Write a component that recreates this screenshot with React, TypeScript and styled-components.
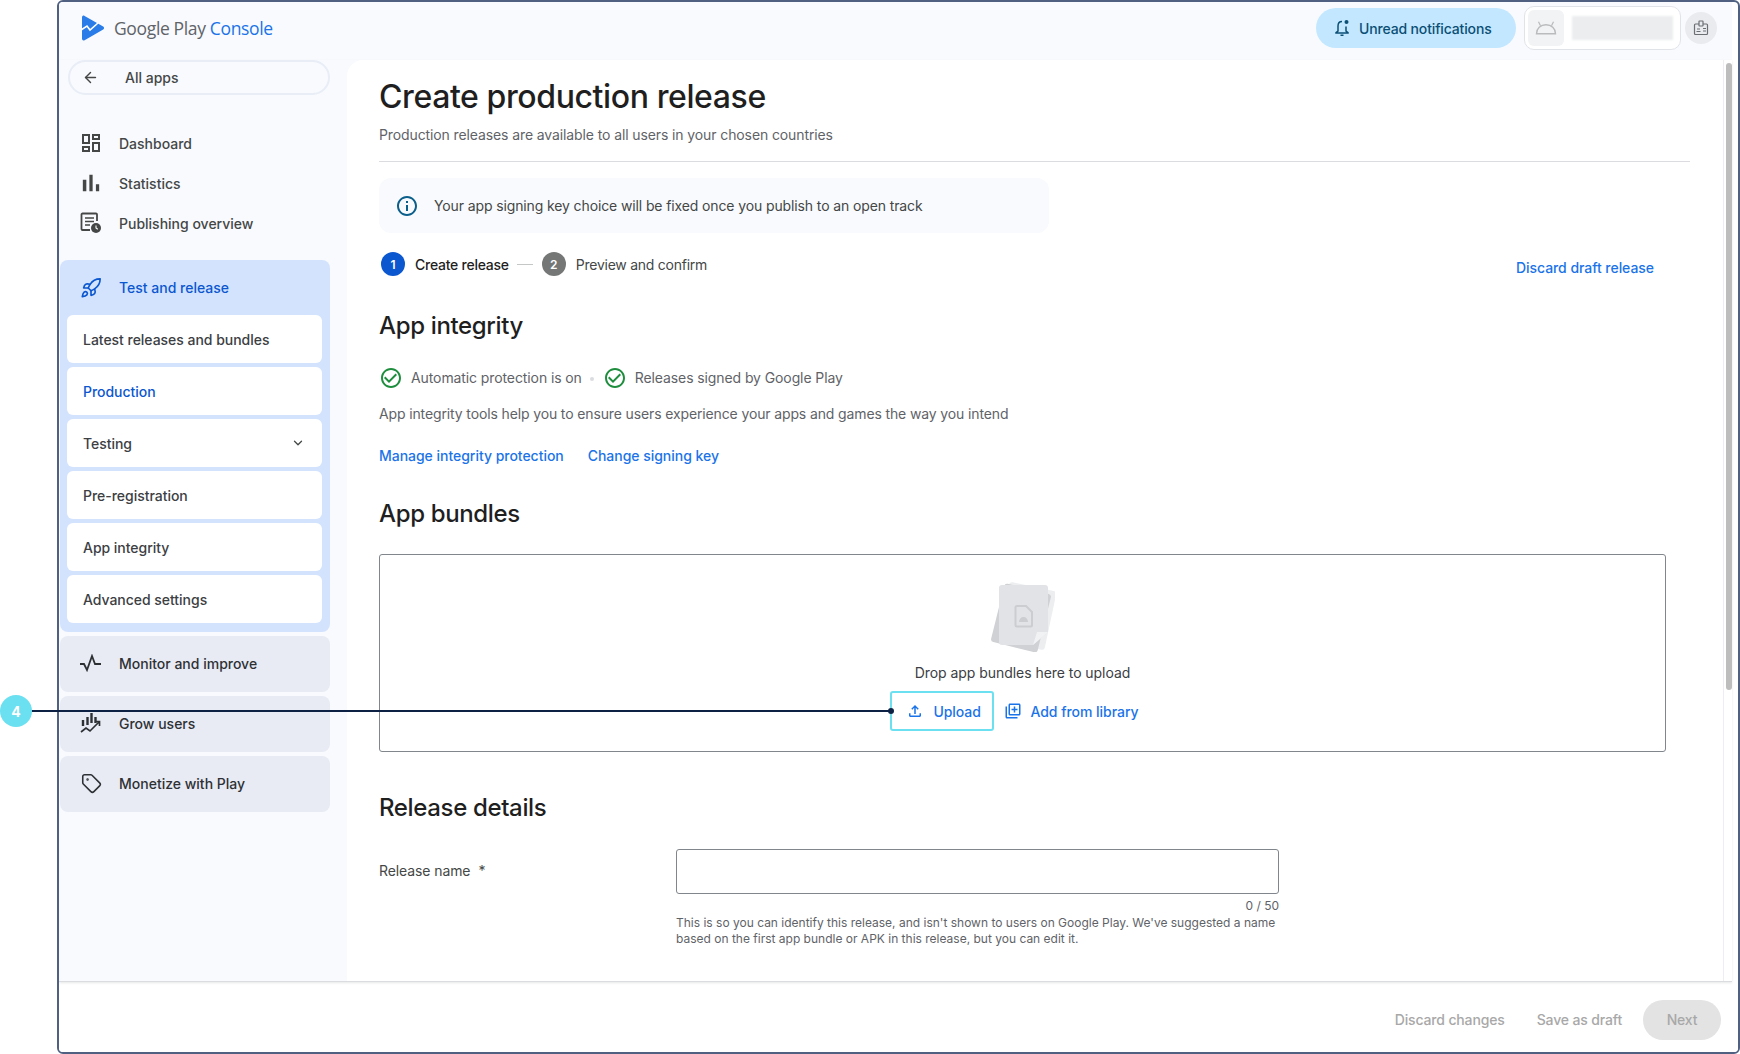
import React from 'react';
import styled, { createGlobalStyle } from 'styled-components';
import { ArrowLeft, ChevronDown, Rocket, Tag } from 'lucide-react';

const Global = createGlobalStyle`
  html, body { margin: 0; padding: 0; background: #fff; }
  body { font-family: Inter, "Liberation Sans", sans-serif; overflow: hidden; }
  * { box-sizing: border-box; }
  svg { flex: none; }
`;

const Page = styled.div`
  position: relative;
  width: 1740px;
  height: 1054px;
  padding-left: 57px;
  overflow: hidden;
`;
const Window = styled.div`
  width: 1683px;
  height: 1054px;
  border: 2px solid #4f6080;
  border-radius: 6px;
  background: #fff;
  display: flex;
  flex-direction: column;
  overflow: hidden;
`;
const TopBar = styled.header`
  height: 58px;
  flex: none;
  margin-right: 6px;
  background: #f8fafe;
  display: flex;
  align-items: center;
  padding: 0 15px 6px 22px;
`;
const LogoWrap = styled.div`
  display: flex;
  align-items: center;
  gap: 9px;
`;
const LogoText = styled.div`
  font-family: "Open Sans", sans-serif;
  font-size: 17.5px;
  letter-spacing: -0.35px;
  color: #5f6368;
  span { color: #1a73e8; }
`;
const TopRight = styled.div`
  margin-left: auto;
  display: flex;
  align-items: center;
`;
const NotifyPill = styled.div`
  width: 200px;
  height: 40px;
  border-radius: 20px;
  background: #c2e7ff;
  display: flex;
  align-items: center;
  gap: 9px;
  padding-left: 18px;
  color: #0b4f75;
  font-size: 14px;
  font-weight: 500;
  letter-spacing: -0.15px;
`;
const AccountBox = styled.div`
  width: 157px;
  height: 44px;
  margin-left: 8px;
  border: 1px solid #e0e3e8;
  border-radius: 10px;
  background: #fff;
  display: flex;
  align-items: center;
  padding: 0 7px 0 3px;
  gap: 8px;
`;
const AndroidTile = styled.div`
  width: 36px;
  height: 36px;
  border-radius: 6px;
  background: #f1f3f4;
  display: flex;
  align-items: center;
  justify-content: center;
`;
const BlurBar = styled.div`
  flex: 1;
  height: 24px;
  background: #ebedee;
  filter: blur(1px);
`;
const RoundIcon = styled.div`
  width: 32px;
  height: 32px;
  margin-left: 4px;
  border-radius: 50%;
  background: #e9ebef;
  display: flex;
  align-items: center;
  justify-content: center;
`;
const Body = styled.div`
  flex: 1;
  min-height: 0;
  margin-right: 6px;
  background: #f8fafe;
  display: flex;
  border-bottom: 1px solid #dadce0;
  box-shadow: 0 1px 2px rgba(60, 64, 67, 0.12);
  position: relative;
`;
const Sidebar = styled.nav`
  width: 288px;
  flex: none;
  padding-left: 1px;
`;
const BackPill = styled.div`
  width: 262px;
  height: 35px;
  margin-left: 8px;
  border: 2px solid #e8edf6;
  border-radius: 18px;
  display: flex;
  align-items: center;
  padding-left: 12px;
  font-size: 14px;
  font-weight: 500;
  color: #444746;
`;
const BackLabel = styled.span`
  margin-left: 26px;
`;
const TopNav = styled.div`
  margin-top: 28px;
  display: flex;
  flex-direction: column;
`;
const NavRow = styled.div`
  height: 40px;
  display: flex;
  align-items: center;
  padding-left: 21px;
  gap: 18px;
  font-size: 14px;
  font-weight: 500;
  color: #444746;
`;
const IconSlot = styled.span`
  width: 20px;
  height: 20px;
  flex: none;
  display: flex;
  align-items: center;
  justify-content: center;
`;
const ActiveGroup = styled.div`
  width: 270px;
  margin-top: 17px;
  height: 372px;
  border-radius: 8px;
  background: #d3e3fd;
  padding: 0 8px 0 7px;
`;
const ActiveHead = styled.div`
  height: 55px;
  display: flex;
  align-items: center;
  padding-left: 14px;
  gap: 18px;
  font-size: 14px;
  font-weight: 500;
  color: #0b57d0;
`;
const SubList = styled.div`
  display: flex;
  flex-direction: column;
  gap: 4px;
`;
const SubItem = styled.div<{ $active?: boolean }>`
  height: 48px;
  border-radius: 6px;
  background: #fff;
  display: flex;
  align-items: center;
  justify-content: space-between;
  padding: 0 17px 0 16px;
  font-size: 14px;
  font-weight: 500;
  letter-spacing: -0.03px;
  color: ${p => (p.$active ? '#0b57d0' : '#3c4043')};
`;
const CollapsedList = styled.div`
  margin-top: 4px;
  display: flex;
  flex-direction: column;
  gap: 4px;
`;
const Collapsed = styled.div`
  width: 270px;
  height: 56px;
  border-radius: 8px;
  background: #e8ebf4;
  display: flex;
  align-items: center;
  padding: 0 0 2px 21px;
  gap: 18px;
  font-size: 14px;
  font-weight: 500;
  color: #2e3134;
`;
const Main = styled.main`
  position: relative;
  flex: 1;
  min-width: 0;
  border-radius: 16px 0 0 0;
  background: #fff;
  overflow: hidden;
  padding: 17px 0 0 32px;
`;
const Title = styled.h1`
  margin: 0;
  font-size: 32px;
  line-height: 40px;
  font-weight: 500;
  letter-spacing: -0.4px;
  color: #1f1f1f;
`;
const Subtitle = styled.div`
  margin-top: 8px;
  font-size: 14px;
  line-height: 20px;
  letter-spacing: -0.11px;
  color: #5f6368;
  padding-bottom: 16px;
  width: 1311px;
  border-bottom: 1px solid #dadce0;
`;
const InfoBanner = styled.div`
  margin-top: 16px;
  width: 670px;
  height: 55px;
  border-radius: 12px;
  background: #f8fafe;
  display: flex;
  align-items: center;
  padding-left: 16px;
  gap: 15px;
  font-size: 14px;
  letter-spacing: -0.12px;
  color: #444746;
`;
const StepRow = styled.div`
  position: relative;
  margin-top: 18px;
  height: 26px;
  width: 1275px;
  display: flex;
  align-items: center;
  padding-left: 2px;
  font-size: 14px;
`;
const StepDot = styled.span<{ $on?: boolean }>`
  width: 24px;
  height: 24px;
  border-radius: 50%;
  background: ${p => (p.$on ? '#0b57d0' : '#747775')};
  color: #fff;
  font-size: 12px;
  font-weight: 600;
  display: flex;
  align-items: center;
  justify-content: center;
`;
const StepLabel = styled.span<{ $on?: boolean }>`
  margin-left: 10px;
  font-weight: ${p => (p.$on ? 500 : 400)};
  letter-spacing: -0.25px;
  color: ${p => (p.$on ? '#1f1f1f' : '#444746')};
`;
const StepDash = styled.span`
  width: 16px;
  height: 1px;
  background: #c4c7c5;
  margin: 0 9px 0 8px;
`;
const DiscardLink = styled.a`
  margin-left: auto;
  margin-top: 6px;
  font-size: 14px;
  font-weight: 500;
  letter-spacing: -0.05px;
  color: #1a73e8;
`;
const Heading = styled.h2<{ $top: number }>`
  margin: ${p => p.$top}px 0 0;
  font-size: 24px;
  line-height: 32px;
  font-weight: 500;
  letter-spacing: -0.35px;
  color: #1f1f1f;
`;
const CheckRow = styled.div`
  margin-top: 24px;
  height: 24px;
  display: flex;
  align-items: center;
  font-size: 14px;
  letter-spacing: -0.1px;
  color: #5f6368;
`;
const CheckLabel = styled.span`
  margin-left: 8px;
  margin-top: -1px;
`;
const Sep = styled.span`
  width: 4px;
  height: 4px;
  border-radius: 50%;
  background: #dadce0;
  margin: 2px 9px 0 8px;
`;
const BodyText = styled.div`
  margin-top: 14px;
  font-size: 14px;
  line-height: 20px;
  letter-spacing: -0.13px;
  color: #5f6368;
`;
const LinkRow = styled.div`
  margin-top: 22px;
  display: flex;
  gap: 24px;
  font-size: 14px;
  line-height: 20px;
  font-weight: 500;
  letter-spacing: -0.03px;
  color: #1a73e8;
`;
const DropZone = styled.div`
  margin-top: 24px;
  width: 1287px;
  height: 198px;
  border: 1px solid #80868b;
  border-radius: 3px;
  display: flex;
  flex-direction: column;
  align-items: center;
  padding-top: 27px;
`;
const DropText = styled.div`
  margin-top: 11px;
  font-size: 14px;
  line-height: 20px;
  letter-spacing: -0.05px;
  color: #3c4043;
`;
const ActionRow = styled.div`
  margin-top: 8px;
  display: flex;
  align-items: center;
  gap: 10px;
  padding-right: 16px;
`;
const UploadButton = styled.div`
  width: 104px;
  height: 40px;
  border: 2px solid #6be0f0;
  border-radius: 3px;
  display: flex;
  align-items: center;
  padding-left: 14px;
  gap: 9px;
  font-size: 14px;
  font-weight: 500;
  letter-spacing: -0.05px;
  color: #1a73e8;
`;
const LibraryButton = styled.div`
  display: flex;
  align-items: center;
  gap: 8px;
  font-size: 14px;
  font-weight: 500;
  letter-spacing: -0.03px;
  color: #1a73e8;
`;
const FormRow = styled.div`
  margin-top: 25px;
  display: flex;
`;
const FormLabel = styled.div`
  width: 297px;
  height: 43px;
  display: flex;
  align-items: center;
  font-size: 14px;
  letter-spacing: -0.1px;
  color: #444746;
  gap: 8px;
`;
const FormField = styled.div`
  width: 603px;
`;
const Input = styled.div`
  height: 45px;
  border: 1px solid #80868b;
  border-radius: 3px;
`;
const Counter = styled.div`
  margin-top: 5px;
  font-size: 12px;
  line-height: 14px;
  text-align: right;
  color: #5f6368;
`;
const Help = styled.div`
  margin-top: 2px;
  font-size: 12px;
  line-height: 16px;
  color: #5f6368;
  width: 612px;
`;
const ScrollTrack = styled.div`
  position: absolute;
  top: 0;
  right: 0;
  bottom: 0;
  width: 9px;
  border-left: 1px solid #eceef0;
  background: #fff;
`;
const ScrollThumb = styled.div`
  margin: 3px 0 0 2px;
  width: 6px;
  height: 627px;
  border-radius: 3px;
  background: #bdbdbd;
`;
const Footer = styled.footer`
  height: 70px;
  flex: none;
  background: #fff;
  display: flex;
  align-items: center;
  justify-content: flex-end;
  padding: 5px 17px 0 0;
  font-size: 14px;
  font-weight: 500;
  letter-spacing: -0.15px;
  color: #a8a8a8;
`;
const FooterAction = styled.span`
  margin-right: 32px;
`;
const NextButton = styled.div`
  width: 78px;
  height: 40px;
  margin-left: -11px;
  border-radius: 20px;
  background: #e3e3e3;
  display: flex;
  align-items: center;
  justify-content: center;
`;
const CalloutLine = styled.div`
  position: absolute;
  left: 30px;
  top: 710px;
  width: 861px;
  height: 2px;
  background: #0d2145;
  &::after {
    content: '';
    position: absolute;
    right: -3px;
    top: -2px;
    width: 6px;
    height: 6px;
    border-radius: 50%;
    background: #0d2145;
  }
`;
const CalloutBadge = styled.div`
  position: absolute;
  left: 0;
  top: 695px;
  width: 32px;
  height: 32px;
  border-radius: 50%;
  background: #6be0f0;
  color: #fff;
  font-size: 14px;
  font-weight: 700;
  display: flex;
  align-items: center;
  justify-content: center;
`;

const M = ({ d, size = 24, color = '#444746' }: { d: string; size?: number; color?: string }) => (
  <svg width={size} height={size} viewBox="0 0 24 24" fill={color}><path d={d} /></svg>
);

const Logo = () => (
  <svg width="24" height="26" viewBox="0 0 24 26">
    <path d="M1 2.500C1 .8 2.300 0 3.600 1l18.600 10.600c1.200.8 1.200 2.200 0 3L3.600 25.200C2.300 26 1 25.200 1 23.500z" fill="#2a7de9" />
    <path d="M0 15l6-4 3 4 8-7" fill="none" stroke="#fff" strokeWidth="1.600" />
  </svg>
);
const DashboardIcon = () => (
  <M size={24} d="M19 5v2h-4V5h4M9 5v6H5V5h4m10 8v6h-4v-6h4M9 17v2H5v-2h4M21 3h-8v6h8V3zM11 3H3v10h8V3zm10 8h-8v10h8V11zm-10 4H3v6h8v-6z" />
);
const StatsIcon = () => <M size={28} d="M5 9.200h3V19H5zM10.600 5h2.800v14h-2.800zm5.600 8H19v6h-2.800z" />;
const PublishIcon = () => (
  <svg width="22" height="22" viewBox="0 0 22 22" fill="none">
    <path d="M17 9V2.500a1 1 0 0 0-1-1H2.500a1 1 0 0 0-1 1V17a1 1 0 0 0 1 1H10" stroke="#444746" strokeWidth="1.800" />
    <path d="M5 6h9M5 9.500h9M5 13h5" stroke="#444746" strokeWidth="1.600" />
    <circle cx="16" cy="16" r="5" fill="#444746" />
    <path d="M16 13.500V16l1.800 1.200" stroke="#fff" strokeWidth="1.100" />
  </svg>
);
const PulseIcon = () => (
  <svg width="24" height="18" viewBox="0 0 24 18" fill="none" stroke="#2e3134" strokeWidth="1.800">
    <path d="M1 10h4l3 6 5-14 3 8h6" />
  </svg>
);
const GrowIcon = () => (
  <svg width="22" height="22" viewBox="0 0 22 22" fill="none" stroke="#2e3134">
    <path d="M3 8v6M7.500 5v8M11.500 1v10M15.500 5v6" strokeWidth="2.400" />
    <path d="M1 20l5-4 4 3 9-9M15 9.500h4.500V14" strokeWidth="1.700" />
  </svg>
);
const AndroidGlyph = ({ size = 22, color = '#b9bbbd' }: { size?: number; color?: string }) => (
  <svg width={size} height={size * 0.7} viewBox="0 0 22 15" fill="none" stroke={color}>
    <path d="M1.500 13.500C1.500 8.500 5.500 4.500 11 4.500s9.500 4 9.500 9z" strokeWidth="1.400" />
    <path d="M5.500 5.500L3.500 1.500M16.500 5.500l2-4" strokeWidth="1.200" />
  </svg>
);
const BadgeIcon = () => (
  <svg width="16" height="16" viewBox="0 0 16 16" fill="none" stroke="#6b6e72" strokeWidth="1.200">
    <rect x="1.500" y="4" width="13" height="10.500" rx="1" />
    <rect x="6" y="1" width="4" height="5" rx=".5" fill="#e9ebef" />
    <path d="M3.500 11.500h4M10 8.500h3M10 11h3M4 9h3" />
  </svg>
);
const BellIcon = () => (
  <svg width="16" height="18" viewBox="0 0 16 18" fill="none">
    <path d="M8 2.500C5.300 2.500 4 4.500 4 7v5l-2 1.500v.500h12v-.500L12 12V7.500" stroke="#0b4f75" strokeWidth="1.500" />
    <circle cx="12.500" cy="3" r="2" fill="#0b4f75" />
    <path d="M6.500 16.200h3" stroke="#0b4f75" strokeWidth="1.600" />
  </svg>
);
const BundleArt = () => (
  <svg width="64" height="70" viewBox="0 0 64 70">
    <rect x="12" y="4" width="48" height="60" rx="3" fill="#eceef0" transform="rotate(12 36 34)" />
    <rect x="6" y="6" width="48" height="60" rx="3" fill="#cfd1d4" transform="rotate(14 30 36)" />
    <path d="M11 3h43a3 3 0 0 1 3 3v44L42 63H11a3 3 0 0 1-3-3V6a3 3 0 0 1 3-3z" fill="#e2e3e7" />
    <path d="M57 50H46l-4 13z" fill="#f1f2f4" />
    <path d="M26 24h9l6 6v13a1.500 1.500 0 0 1-1.500 1.500h-13.500A1.500 1.500 0 0 1 24.500 43V25.500A1.500 1.500 0 0 1 26 24z" fill="none" stroke="#cbcdd0" strokeWidth="2" />
    <path d="M28 40c0-3 2-5 4.500-5s4.500 2 4.500 5z" fill="#cbcdd0" />
  </svg>
);

const INFO = 'M11 7h2v2h-2zm0 4h2v6h-2zm1-9C6.480 2 2 6.480 2 12s4.480 10 10 10 10-4.480 10-10S17.520 2 12 2zm0 18c-4.410 0-8-3.590-8-8s3.590-8 8-8 8 3.590 8 8-3.590 8-8 8z';
const CHECK = 'M16.590 7.580L10 14.170l-3.590-3.580L5 12l5 5 8-8zM12 2C6.480 2 2 6.480 2 12s4.480 10 10 10 10-4.480 10-10S17.520 2 12 2zm0 18c-4.420 0-8-3.580-8-8s3.580-8 8-8 8 3.580 8 8-3.580 8-8 8z';
const UPLOAD = 'M18 15v3H6v-3H4v3c0 1.100.9 2 2 2h12c1.100 0 2-.9 2-2v-3h-2zM7 9l1.410 1.410L11 7.830V16h2V7.830l2.590 2.580L17 9l-5-5-5 5z';
const LIBRARY = 'M4 6H2v14c0 1.100.9 2 2 2h14v-2H4V6zm16-4H8c-1.100 0-2 .9-2 2v12c0 1.100.9 2 2 2h12c1.100 0 2-.9 2-2V4c0-1.100-.9-2-2-2zm0 14H8V4h12v12zm-7-2h2v-3h3V9h-3V6h-2v3h-3v2h3z';

export default function App() {
  return (
    <Page>
      <Global />
      <Window>
        <TopBar>
          <LogoWrap>
            <Logo />
            <LogoText>Google Play <span>Console</span></LogoText>
          </LogoWrap>
          <TopRight>
            <NotifyPill><BellIcon />Unread notifications</NotifyPill>
            <AccountBox>
              <AndroidTile><AndroidGlyph /></AndroidTile>
              <BlurBar />
            </AccountBox>
            <RoundIcon><BadgeIcon /></RoundIcon>
          </TopRight>
        </TopBar>
        <Body>
          <Sidebar>
            <BackPill>
              <ArrowLeft size={17} color="#444746" strokeWidth={2} />
              <BackLabel>All apps</BackLabel>
            </BackPill>
            <TopNav>
              <NavRow><IconSlot><DashboardIcon /></IconSlot>Dashboard</NavRow>
              <NavRow><IconSlot><StatsIcon /></IconSlot>Statistics</NavRow>
              <NavRow><IconSlot><PublishIcon /></IconSlot>Publishing overview</NavRow>
            </TopNav>
            <ActiveGroup>
              <ActiveHead>
                <IconSlot><Rocket size={22} color="#0b57d0" strokeWidth={1.8} /></IconSlot>
                Test and release
              </ActiveHead>
              <SubList>
                <SubItem>Latest releases and bundles</SubItem>
                <SubItem $active>Production</SubItem>
                <SubItem>Testing<ChevronDown size={14} color="#444746" strokeWidth={2.2} /></SubItem>
                <SubItem>Pre-registration</SubItem>
                <SubItem>App integrity</SubItem>
                <SubItem>Advanced settings</SubItem>
              </SubList>
            </ActiveGroup>
            <CollapsedList>
              <Collapsed><IconSlot><PulseIcon /></IconSlot>Monitor and improve</Collapsed>
              <Collapsed><IconSlot><GrowIcon /></IconSlot>Grow users</Collapsed>
              <Collapsed><IconSlot><Tag size={21} color="#2e3134" strokeWidth={1.8} /></IconSlot>Monetize with Play</Collapsed>
            </CollapsedList>
          </Sidebar>
          <Main>
            <Title>Create production release</Title>
            <Subtitle>Production releases are available to all users in your chosen countries</Subtitle>
            <InfoBanner>
              <M size={24} color="#0b5f8a" d={INFO} />
              Your app signing key choice will be fixed once you publish to an open track
            </InfoBanner>
            <StepRow>
              <StepDot $on>1</StepDot>
              <StepLabel $on>Create release</StepLabel>
              <StepDash />
              <StepDot>2</StepDot>
              <StepLabel>Preview and confirm</StepLabel>
              <DiscardLink>Discard draft release</DiscardLink>
            </StepRow>
            <Heading $top={33}>App integrity</Heading>
            <CheckRow>
              <M size={24} color="#1e8e3e" d={CHECK} />
              <CheckLabel>Automatic protection is on</CheckLabel>
              <Sep />
              <M size={24} color="#1e8e3e" d={CHECK} />
              <CheckLabel>Releases signed by Google Play</CheckLabel>
            </CheckRow>
            <BodyText>App integrity tools help you to ensure users experience your apps and games the way you intend</BodyText>
            <LinkRow><span>Manage integrity protection</span><span>Change signing key</span></LinkRow>
            <Heading $top={32}>App bundles</Heading>
            <DropZone>
              <BundleArt />
              <DropText>Drop app bundles here to upload</DropText>
              <ActionRow>
                <UploadButton><M size={18} color="#1a73e8" d={UPLOAD} />Upload</UploadButton>
                <LibraryButton><M size={18} color="#1a73e8" d={LIBRARY} />Add from library</LibraryButton>
              </ActionRow>
            </DropZone>
            <Heading $top={40}>Release details</Heading>
            <FormRow>
              <FormLabel>Release name <span>*</span></FormLabel>
              <FormField>
                <Input />
                <Counter>0 / 50</Counter>
                <Help>This is so you can identify this release, and isn't shown to users on Google Play. We've suggested a name based on the first app bundle or APK in this release, but you can edit it.</Help>
              </FormField>
            </FormRow>
            <ScrollTrack><ScrollThumb /></ScrollTrack>
          </Main>
        </Body>
        <Footer>
          <FooterAction>Discard changes</FooterAction>
          <FooterAction>Save as draft</FooterAction>
          <NextButton>Next</NextButton>
        </Footer>
      </Window>
      <CalloutLine />
      <CalloutBadge>4</CalloutBadge>
    </Page>
  );
}
